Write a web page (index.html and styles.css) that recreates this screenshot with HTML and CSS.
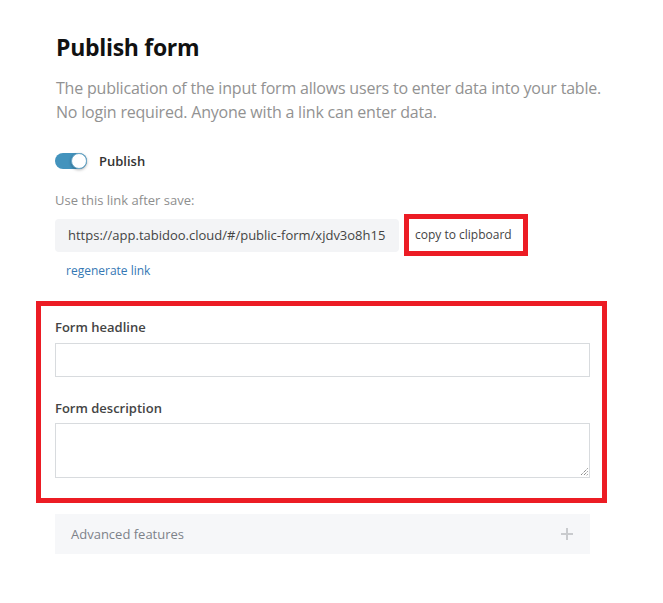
FILE: index.html
```html
<!DOCTYPE html>
<html lang="en">
<head>
<meta charset="utf-8">
<title>Publish form</title>
<link rel="stylesheet" href="styles.css">
</head>
<body>
<div class="page">
  <h1 class="title">Publish form</h1>
  <p class="intro">The publication of the input form allows users to enter data into your table.<br>No login required. Anyone with a link can enter data.</p>

  <div class="toggle-row">
    <span class="toggle"><span class="knob"></span></span>
    <span class="toggle-label">Publish</span>
  </div>

  <div class="hint">Use this link after save:</div>
  <div class="link-row">
    <div class="url">https://app.tabidoo.cloud/#/public-form/xjdv3o8h15</div>
    <div class="copy">copy to clipboard</div>
  </div>
  <div class="regen">regenerate link</div>

  <div class="form-box">
    <div class="label">Form headline</div>
    <div class="input"></div>
    <div class="label label-second">Form description</div>
    <div class="textarea">
      <svg class="grip" width="9" height="9" viewBox="0 0 9 9"><path d="M8.5 1.5 L1.5 8.5 M8.5 4.5 L4.5 8.5 M8.5 7.5 L7.5 8.5" stroke="#555" stroke-width="1" stroke-dasharray="1 1" fill="none"/></svg>
    </div>
  </div>

  <div class="advanced">
    <span>Advanced features</span>
    <svg class="plus" width="12" height="12" viewBox="0 0 12 12"><path d="M6 0 V12 M0 6 H12" stroke="#c9cbce" stroke-width="2" fill="none"/></svg>
  </div>
</div>
</body>
</html>
```

FILE: styles.css
```css
html, body {
  margin: 0;
  padding: 0;
  background: #ffffff;
}
body {
  font-family: "Open Sans", "Noto Sans", sans-serif;
  color: #444;
}
.page {
  width: 535px;
  margin-left: 55px;
  padding-top: 32px;
}
.title {
  margin: 0 0 0 1px;
  font-size: 23px;
  letter-spacing: -0.3px;
  line-height: 30px;
  font-weight: 700;
  color: #111;
}
.intro {
  margin: 14px 0 0 1px;
  font-size: 16px;
  letter-spacing: -0.2px;
  line-height: 24px;
  color: #929292;
  white-space: nowrap;
}
.toggle-row {
  display: flex;
  align-items: center;
  margin-top: 28px;
  height: 18px;
}
.toggle {
  position: relative;
  width: 32px;
  height: 16px;
  border-radius: 8px;
  background: #4393bd;
}
.knob {
  position: absolute;
  right: 0;
  top: 0;
  width: 16px;
  height: 16px;
  border-radius: 50%;
  background: #fff;
  box-shadow: 0 1px 3px rgba(0,0,0,0.3);
  box-sizing: border-box;
  border: 1px solid #6aa8c9;
}
.toggle-label {
  margin-left: 12px;
  font-size: 13px;
  font-weight: 600;
  color: #333;
}
.hint {
  margin-top: 21px;
  font-size: 13px;
  line-height: 18px;
  color: #8e8e8e;
}
.link-row {
  display: flex;
  align-items: center;
  margin-top: 5px;
}
.url {
  width: 344px;
  height: 33px;
  box-sizing: border-box;
  padding-left: 13px;
  background: #f3f4f6;
  border-radius: 4px;
  font-size: 13px;
  line-height: 33px;
  color: #444;
  white-space: nowrap;
}
.copy {
  margin-left: 5px;
  width: 124px;
  height: 42px;
  box-sizing: border-box;
  border: 5px solid #ec1c24;
  padding-left: 6px;
  font-size: 12px;
  line-height: 32px;
  color: #444;
}
.regen {
  margin: 6px 0 0 11px;
  font-size: 12px;
  line-height: 18px;
  color: #3478b4;
}
.form-box {
  margin: 21px -17px 0 -19px;
  border: 5px solid #ec1c24;
  padding: 12px 12px 20px 14px;
}
.label {
  font-size: 13px;
  font-weight: 600;
  line-height: 18px;
  color: #444;
}
.label-second {
  margin-top: 22px;
}
.input {
  margin-top: 7px;
  height: 34px;
  box-sizing: border-box;
  border: 1px solid #d8dbde;
}
.textarea {
  position: relative;
  margin-top: 6px;
  height: 55px;
  box-sizing: border-box;
  border: 1px solid #d8dbde;
}
.grip {
  position: absolute;
  right: 1px;
  bottom: 1px;
}
.advanced {
  margin-top: 11px;
  height: 40px;
  background: #f6f7f9;
  display: flex;
  align-items: center;
  justify-content: space-between;
  padding: 0 17px 0 16px;
  font-size: 13px;
  color: #7d8289;
}
```
